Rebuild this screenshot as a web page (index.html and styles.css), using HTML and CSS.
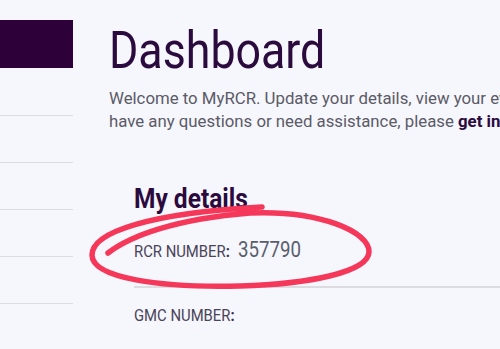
FILE: index.html
```html
<!DOCTYPE html>
<html lang="en">
  <head>
    <meta charset="UTF-8" />
    <meta name="viewport" content="width=device-width, initial-scale=1.0" />
    <title>MyRCR Dashboard</title>
    <link rel="stylesheet" href="styles.css">
  </head>
  <body>
    <div class="layout">
      <aside class="sidebar">
        <div class="brand"></div>
        <ul class="nav">
          <li></li>
          <li></li>
          <li></li>
          <li></li>
          <li></li>
        </ul>
      </aside>

      <main class="main">
        <h1 class="title">Dashboard</h1>
        <p class="intro">
          Welcome to MyRCR. Update your details, view your events and bookings, and if you<br>
          have any questions or need assistance, please <a href="#">get in touch</a>.
        </p>

        <section class="details">
          <h2 class="details-title">My details</h2>
          <div class="row first">
            <span class="label">RCR NUMBER<b>:</b></span>
            <span class="value">357790</span>
          </div>
          <div class="row">
            <span class="label">GMC NUMBER<b>:</b></span>
          </div>
        </section>
      </main>
    </div>

    <!-- hand drawn ring round the RCR number -->
    <svg class="scribble" viewBox="0 0 500 349" width="500" height="349">
      <path d="M108,253 C130,236 175,219 250,213 C320,210 370,232 369,252 C368,272 310,284 240,286 C160,288 92,278 92,255 C92,232 150,213 262,207"
            fill="none" stroke="#f5385a" stroke-width="5.5" stroke-linecap="round" stroke-linejoin="round" />
    </svg>
  </body>
</html>
```

FILE: styles.css
```css
body {
  margin: 0;
  background: #f6f6fd;
  font-family: Roboto, "Liberation Sans", sans-serif;
  color: #5b5b66;
  overflow: hidden;
}
.layout {
  display: flex;
  gap: 36px;
  min-height: 100vh;
}
.sidebar {
  width: 73px;
  flex-shrink: 0;
  padding-top: 20px;
}
.brand {
  height: 48px;
  background: #2e0039;
}
.nav {
  list-style: none;
  margin: 1px 0 0;
  padding: 0;
}
.nav li {
  height: 46px;
  border-bottom: 1px solid #dcdce2;
}
.main {
  flex: 1;
  min-width: 0;
  padding-top: 25px;
  white-space: nowrap;
  overflow: hidden;
}
/* the brand face is narrower than Roboto, so squeeze the headings */
.title {
  margin: 0;
  font-weight: 400;
  font-size: 52px;
  line-height: 52px;
  color: #2b0a3d;
  transform: scaleX(0.86);
  transform-origin: left;
}
.intro {
  margin: 10px 0 0;
  font-size: 16.8px;
  line-height: 23px;
}
.intro a {
  color: #2b0a3d;
  font-weight: 700;
  text-decoration: none;
}
.details {
  margin-top: 52px;
  padding-left: 25px;
}
.details-title {
  margin: 0 0 22px;
  font-size: 28px;
  line-height: 28px;
  font-weight: 700;
  color: #2b0a3d;
  transform: scaleX(0.875);
  transform-origin: left;
}
.row {
  display: flex;
  align-items: baseline;
  line-height: 30px;
}
.row.first {
  padding-bottom: 19px;
  border-bottom: 2px solid #dcdce0;
  margin-bottom: 13px;
}
.label {
  display: inline-block;
  font-size: 16.5px;
  color: #4a4458;
  transform: scaleX(0.9);
  transform-origin: left;
}
.label b {
  color: #3a3048;
}
.value {
  display: inline-block;
  margin-left: -3px;
  font-size: 22px;
  color: #5a5e6c;
  transform: scaleX(0.85);
  transform-origin: left;
}
.scribble {
  position: absolute;
  top: 0;
  left: 0;
  pointer-events: none;
}
```
